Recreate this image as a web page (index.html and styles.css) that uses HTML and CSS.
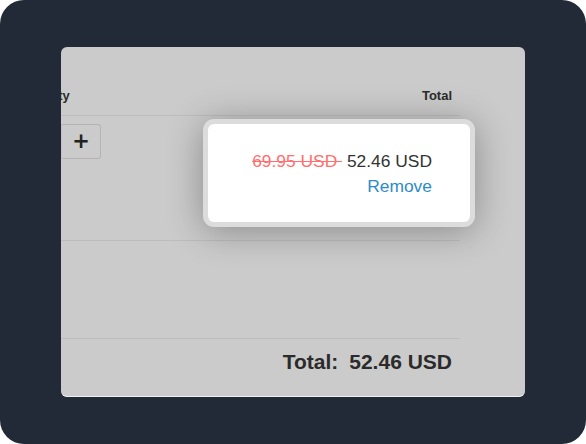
FILE: index.html
```html
<!DOCTYPE html>
<html>
<head>
<meta charset="utf-8">
<link rel="stylesheet" href="styles.css">
</head>
<body>
<div class="frame">
  <div class="panel">
    <div class="cart">
      <div class="row head">
        <span class="qty-h">Quantity</span>
        <span class="total-h">Total</span>
      </div>
      <div class="row item">
        <div class="qty">
          <button class="btn plus">+</button>
        </div>
      </div>
      <div class="row empty"></div>
      <div class="row sum">
        <span class="sum-label">Total:</span>
        <span class="sum-value">52.46 USD</span>
      </div>
    </div>
    <div class="popup">
      <div class="popup-inner">
        <div class="prices"><span class="old">69.95 USD </span> <span class="new">52.46 USD</span></div>
        <a class="remove">Remove</a>
      </div>
    </div>
  </div>
</div>
</body>
</html>
```
FILE: styles.css
```css
html, body {
  margin: 0;
  padding: 0;
  background: #ffffff;
}
body {
  font-family: "Liberation Sans", Arial, sans-serif;
  color: #333;
}
.frame {
  width: 586px;
  height: 444px;
  box-sizing: border-box;
  background: #222a38;
  border-radius: 24px;
  padding: 47px 61px;
}
.panel {
  position: relative;
  width: 464px;
  height: 350px;
  background: #cbcbcb;
  border-radius: 6px;
  overflow: hidden;
  border-bottom: 1px solid #f0f0f0;
  box-sizing: border-box;
}
.cart {
  width: 399px;
  display: flex;
  flex-direction: column;
}
.row {
  display: flex;
  border-bottom: 1px solid #bdbdbd;
}
.head {
  height: 69px;
  align-items: flex-end;
  justify-content: space-between;
  font-size: 13px;
  font-weight: bold;
  color: #2b2b2b;
  padding: 0 8px 12px 0;
  box-sizing: border-box;
}
.qty-h {
  margin-left: -44px;
}
.item {
  height: 125px;
  box-sizing: border-box;
  padding-top: 8px;
}
.qty {
  display: flex;
  height: 35px;
}
.btn {
  width: 40px;
  height: 35px;
  border: 1px solid #b4b4b4;
  border-radius: 3px;
  background: #cbcbcb;
  font-family: "DejaVu Sans", sans-serif;
  font-weight: bold;
  font-size: 21px;
  color: #222;
  padding: 0;
  line-height: 1;
}
.plus {
  border-top-left-radius: 0;
  border-bottom-left-radius: 0;
  border-left-color: #c0c0c0;
}
.empty {
  height: 98px;
  box-sizing: border-box;
}
.sum {
  border-bottom: none;
  justify-content: flex-end;
  gap: 11px;
  padding: 11px 8px 0 0;
  font-size: 21px;
  font-weight: bold;
  color: #2b2b2b;
}
.popup {
  position: absolute;
  left: 142px;
  top: 72px;
  width: 272px;
  height: 108px;
  box-sizing: border-box;
  padding: 5px;
  background: #dcdcdc;
  border-radius: 11px;
  box-shadow: 0 4px 36px rgba(0, 0, 0, 0.32);
}
.popup-inner {
  height: 100%;
  background: #ffffff;
  border-radius: 6px;
  box-sizing: border-box;
  padding: 25px 38px 0 0;
  text-align: right;
  font-size: 17.4px;
  line-height: 25px;
}
.prices {
  white-space: pre;
}
.old {
  color: #ff6f6f;
  text-decoration: line-through;
}
.new {
  color: #333;
}
.remove {
  display: block;
  color: #2e8bc9;
}
```
